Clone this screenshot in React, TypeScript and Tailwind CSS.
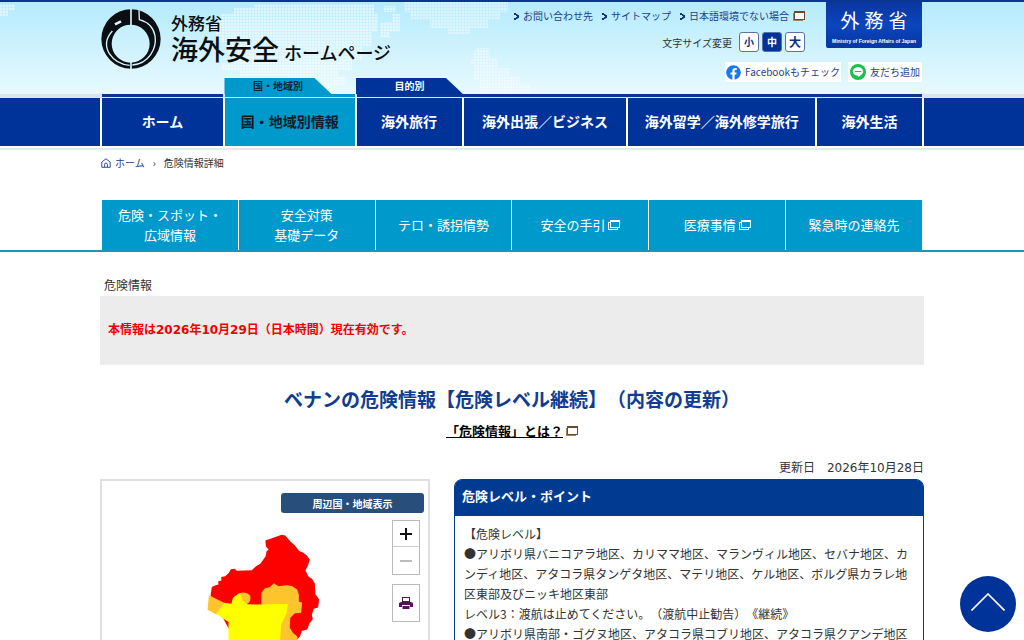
import type { ReactNode } from 'react';
import { FaFacebook } from 'react-icons/fa';
import clsx from 'clsx';

/* ── Icons and drawings ── */

function NewWindowIcon({ className }: { className?: string }) {
  return (
    <svg viewBox="0 0 12 10" className={className} aria-hidden="true">
      <path d="M0 2h2v7h8v1H0z" fill="#a5825a" />
      <rect x="1.500" y="0.500" width="10" height="8" fill="#fff" stroke="#6b4a2b" />
      <path d="M1 1h11" stroke="#6b4a2b" strokeWidth="2" />
    </svg>
  );
}

function NewWindowLineIcon({ className }: { className?: string }) {
  return (
    <svg viewBox="0 0 12 10" className={className} aria-hidden="true">
      <path fill="#fff" fillRule="evenodd" d="M2 0h10v8h-2v2H0V2h2zM3 2v5h8V2zM1 3v6h8V8H2V3z" />
    </svg>
  );
}

function ArrowDots() {
  return (
    <svg viewBox="0 0 5 7" fill="#14337f" className="h-[7px] w-[5px] shrink-0" aria-hidden="true">
      <path d="M0 0h2v2H0zM3 2h2v3H3zM0 5h2v2H0zM2 1h1.5v2H2zM2 4h1.5v2H2z" />
    </svg>
  );
}

function LogoMark({ className }: { className?: string }) {
  return (
    <svg viewBox="0 0 180 180" fill="none" className={className} aria-hidden="true">
      <path
        fill="#0b0f14"
        fillRule="evenodd"
        d="M90 1a89 89 0 1 1 0 178a89 89 0 1 1 0-178zM89 47a57 57 0 1 0 0 114a57 57 0 1 0 0-114z"
      />
      <g stroke="#d3f4fd">
        <path d="M90 0v50M90 155v25" strokeWidth="5" />
        <path d="M34 66C14 88 12 112 25 134C38 154 58 167 86 169" strokeWidth="4" />
        <path d="M114 4l1 28c22 6 42 22 47 48c6 38-18 84-68 88" strokeWidth="4" />
        <path d="M42 46l18-9" strokeWidth="8" />
      </g>
    </svg>
  );
}

function LineIcon({ className }: { className?: string }) {
  return (
    <svg viewBox="0 0 16 16" className={className} aria-hidden="true">
      <circle cx="8" cy="8" r="8" fill="#17c14c" />
      <path d="M8 3.2c3 0 5.2 1.900 5.200 4.300c0 2.300-3 4.300-5 5.600c.1-.9 0-1.300-.6-1.300C4.800 11.500 2.800 9.800 2.800 7.500c0-2.400 2.200-4.300 5.200-4.300z" fill="#fff" />
      <path d="M5 7.500h6" stroke="#17c14c" />
    </svg>
  );
}

function HomeIcon({ className }: { className?: string }) {
  return (
    <svg viewBox="0 0 10 10" fill="none" stroke="#2f4f9f" className={className} aria-hidden="true">
      <path d="M0.800 9.300V4L5 0.800L9.200 4v5.300z" />
      <path d="M3.600 9V6.500a1.400 1.400 0 0 1 2.800 0V9" />
    </svg>
  );
}

function PrintIcon({ className }: { className?: string }) {
  return (
    <svg viewBox="0 0 14 14" fill="#571158" className={className} aria-hidden="true">
      <path fillRule="evenodd" d="M3 1h8v5H3zM4 2v3h6V2z" />
      <path d="M2 6h10l2 1v4h-3V9H3v2H0V7z" />
      <path d="M3.500 10h7v3h-7z" />
    </svg>
  );
}

// Dotted continents behind the site title
function WorldDots() {
  return (
    <svg viewBox="0 0 1024 94" preserveAspectRatio="xMidYMin slice" className="absolute inset-0 h-full w-full" aria-hidden="true">
      <defs>
        <pattern id="dots" width="3" height="3" patternUnits="userSpaceOnUse">
          <rect width="2.400" height="2.400" fill="#fff" />
        </pattern>
      </defs>
      <g fill="url(#dots)" opacity="0.55">
        <path d="M0 2h15v6H8v6H0z" />
        <path d="M222 12h12V6h20v-4h120v10h4v18h-6v14h-10v14h-10v10h-14v6h8v10h-12v2h-16v-4h-30v-8h-48v-6h-18v-6h12v-10h-6V40h-12V28h-12z" />
        <path d="M380 20h12v-8h8v18h-10v6h-10zM384 4h12v6h-12z" />
      </g>
      <g fill="url(#dots)" opacity="0.45">
        <path d="M404 0h104v10h-8v8h-12v8h-18v6h-22v-6h-18v-8h-20v-8h-6z" />
        <path d="M476 46h14v10h8v10h12v8h10v8h10v12h-50v-16h-6V62h-4z" />
      </g>
    </svg>
  );
}

function DangerMap() {
  return (
    <svg viewBox="34 31 982 600" preserveAspectRatio="xMinYMin meet" className="block w-full" role="img" aria-label="危険情報地図">
      <path
        fill="#fd0000"
        d="M575 193L586 195L603 215L614 224L628 242L640 247L652 256L660 268L654 286L647 300L655 318L667 326L675 340L677 372L688 388L685 412L672 416L666 434L669 447L659 460L652 478L636 483L630 500L610 520L440 520L361 375L365 350L376 345L385 343L384 333L394 331L393 320L405 318L416 308L422 297L434 295L440 301L485 300L498 288L511 280L527 258L530 242L536 238L528 228L526 210L548 203Z"
      />
      <path fill="#fdc42b" d="M356 375L402 398L380 434L352 419Z" />
      <path
        fill="#fdc42b"
        d="M514 404V368L524 355L540 350L552 339L566 348L590 345L606 347L622 358L627 374V395L637 397L634 428L614 430L601 444L600 474L609 488L623 500L618 570L560 600H500Z"
      />
      <path fill="#fdc42b" d="M440 374C450 364 470 364 480 376C484 392 478 398 466 404H430Z" />
      <path
        fill="#ff0"
        d="M402 398L424 401L428 384C438 372 448 370 454 376C454 388 460 396 472 402L500 403L594 401L590 430L574 464L570 520V630H415V456L378 432Z"
      />
    </svg>
  );
}

/* ── Page data ── */

const navItems = ['ホーム', '国・地域別情報', '海外旅行', '海外出張／ビジネス', '海外留学／海外修学旅行', '海外生活'];

const navColumns =
  'mx-auto grid w-full max-w-[824px] grid-cols-[121fr_130fr_105fr_163fr_187fr_105fr] gap-x-[2px] px-[2px]';

const subTabs: { label: ReactNode; external?: boolean }[] = [
  { label: <>危険・スポット・<br />広域情報</> },
  { label: <>安全対策<br />基礎データ</> },
  { label: 'テロ・誘拐情勢' },
  { label: '安全の手引', external: true },
  { label: '医療事情', external: true },
  { label: '緊急時の連絡先' },
];

const fontSizes = ['小', '中', '大'];

function SiteHeader() {
  return (
    <header>
      <div className="relative border-t-2 border-[#0a3592] bg-linear-to-b from-[#b4ebfd] to-[#e8f9fe]">
        <WorldDots />
        <div className="relative mx-auto flex h-[76px] max-w-[824px] justify-between">
          <a href="#" className="flex gap-[10px] pt-[7px] text-[#0b0f14]">
            <LogoMark className="ml-px size-[60px]" />
            <h1 className="pt-[4px] font-medium">
              <span className="block text-[17px] leading-[20px]">外務省</span>
              <span className="block leading-[32px]">
                <span className="text-[27px]">海外安全</span>
                <span className="ml-[5px] text-[18px]">ホームページ</span>
              </span>
            </h1>
          </a>

          <div className="flex flex-col items-end text-[10px] text-[#1f3f8c]">
            <div className="flex gap-[21px]">
              <div className="flex flex-col items-end gap-[8px] pt-[6px]">
                <ul className="flex gap-[9px] leading-4">
                  <li className="flex items-center gap-1"><ArrowDots /><a href="#">お問い合わせ先</a></li>
                  <li className="flex items-center gap-1"><ArrowDots /><a href="#">サイトマップ</a></li>
                  <li className="flex items-center gap-1">
                    <ArrowDots /><a href="#">日本語環境でない場合</a>
                    <NewWindowIcon className="h-[10px] w-3" />
                  </li>
                </ul>
                <div className="flex items-center gap-[3px]">
                  <span className="mr-1 text-[#333]">文字サイズ変更</span>
                  {fontSizes.map((size) => (
                    <button
                      key={size}
                      className={clsx(
                        'size-5 rounded-[3px] border border-[#5973a8] font-bold leading-4',
                        size === '中' ? 'bg-[#003399] text-white' : 'bg-white text-[#0a2d80]',
                        size === '大' && 'text-[12px]',
                      )}
                    >
                      {size}
                    </button>
                  ))}
                </div>
              </div>
              <a href="#" className="mr-[2px] flex h-[46px] w-24 flex-col items-center rounded-b-[2px] bg-linear-to-b from-[#0a36a0] via-[#0b45bd] to-[#0836a4] pt-[6px] text-white">
                <span className="flex gap-[5px] font-['Noto_Sans_CJK_JP',sans-serif] text-[19px] leading-[24px]">
                  <span>外</span><span>務</span><span>省</span>
                </span>
                <span className="mt-[3px] whitespace-nowrap font-['Liberation_Sans',sans-serif] text-[5px] font-bold leading-[12px]">
                  Ministry of Foreign Affairs of Japan
                </span>
              </a>
            </div>
            <div className="mr-[2px] mt-[10px] flex gap-[7px] leading-5">
              <a href="#" className="flex items-center gap-1 bg-white px-px">
                <FaFacebook className="size-[15px] text-[#1877f2]" />
                Facebookもチェック
              </a>
              <a href="#" className="flex items-center gap-1 bg-white px-[2px]">
                <LineIcon className="size-4" />
                友だち追加
              </a>
            </div>
          </div>
        </div>

        {/* ── Category tabs on top of the menu ── */}
        <div className={clsx(navColumns, 'relative text-[10px] font-bold leading-4')}>
          <span className="col-start-2 w-[107px] bg-[#0099cc] text-center text-[#10222e] [clip-path:polygon(0_0,90px_0,107px_100%,0_100%)]">
            国・地域別
          </span>
          <span className="w-[107px] bg-[#003399] text-center text-white [clip-path:polygon(0_0,90px_0,107px_100%,0_100%)]">
            目的別
          </span>
        </div>
      </div>

      {/* ── Main menu ── */}
      <div className="bg-[#e0e3e8] pb-px">
        <div className={navColumns}>
          <span className="h-[3px] bg-[#0d3590]" />
          <span className="h-[3px] bg-[#0099cc]" />
          <span className="col-span-4 h-[3px] bg-[#0d3590]" />
        </div>
      </div>
      <nav className="border-b-2 border-white bg-[#003399]">
        <ul className={clsx(navColumns, 'bg-white text-center text-[14px] font-bold leading-[46px]')}>
          {navItems.map((item) => (
            <li key={item}>
              <a
                href="#"
                className={clsx(
                  'block whitespace-nowrap pb-[2px]',
                  item === '国・地域別情報' ? 'bg-[#0099cc] text-[#0b1c26]' : 'bg-[#003399] text-white',
                )}
              >
                {item}
              </a>
            </li>
          ))}
        </ul>
      </nav>
      <div className="h-[2px] bg-[#e6e6ee]" />
    </header>
  );
}

function SubTabs() {
  return (
    <nav className="mt-[26px] border-b-2 border-[#1b94c0]">
      <ul className="mx-auto grid max-w-[820px] grid-cols-6 gap-px text-[13px] leading-5 text-white">
        {subTabs.map((tab, i) => (
          <li key={i}>
            <a href="#" className="flex h-[50px] items-center justify-center gap-[3px] bg-[#0099cc] text-center">
              <span>{tab.label}</span>
              {tab.external && <NewWindowLineIcon className="h-[10px] w-3" />}
            </a>
          </li>
        ))}
      </ul>
    </nav>
  );
}

function MapPanel() {
  return (
    <section className="relative w-[330px] shrink-0 border-2 border-[#e0e0e0]">
      <DangerMap />
      <button className="absolute right-1 top-3 h-5 w-[143px] rounded-[3px] bg-[#284f7b] text-[10px] font-bold text-white">
        周辺国・地域表示
      </button>
      <div className="absolute right-2 top-[39px] flex w-7 flex-col gap-[9px]">
        <div className="divide-y divide-[#ccc] border border-[#bbb] bg-white">
          <button aria-label="拡大" className="flex h-[26px] w-full items-center justify-center">
            <svg viewBox="0 0 12 12" stroke="#111" strokeWidth="2" className="size-3"><path d="M6 0v12M0 6h12" /></svg>
          </button>
          <button aria-label="縮小" className="flex h-[27px] w-full items-center justify-center">
            <svg viewBox="0 0 12 12" stroke="#bbb" strokeWidth="2" className="size-3"><path d="M0 6h12" /></svg>
          </button>
        </div>
        <button aria-label="印刷" className="flex h-[38px] items-center justify-center border border-[#bbb] bg-white">
          <PrintIcon className="size-[14px]" />
        </button>
      </div>
    </section>
  );
}

function LevelPanel() {
  return (
    <section className="min-w-0 flex-1 rounded-t-[8px] border border-[#003b92]">
      <h3 className="rounded-t-[6px] bg-[#003b92] pb-1 pl-[7px] text-[13px] font-bold leading-8 text-white">
        危険レベル・ポイント
      </h3>
      <div className="pb-6 pl-[9px] pr-3 pt-[8px] leading-5">
        <p>【危険レベル】</p>
        <p>●アリボリ県バニコアラ地区、カリママ地区、マランヴィル地区、セバナ地区、カンディ地区、アタコラ県タンゲタ地区、マテリ地区、ケル地区、ボルグ県カラレ地区東部及びニッキ地区東部</p>
        <p>レベル3：渡航は止めてください。（渡航中止勧告）《継続》</p>
        <p>●アリボリ県南部・ゴグヌ地区、アタコラ県コブリ地区、アタコラ県クアンデ地区</p>
      </div>
    </section>
  );
}

export default function App() {
  return (
    <div
      lang="ja"
      className="h-screen overflow-hidden bg-white font-['Noto_Sans_CJK_JP',sans-serif] text-[12px] text-[#333] [text-spacing-trim:space-all]"
    >
      <SiteHeader />

      <ol className="mx-auto mt-[3px] flex max-w-[822px] items-center gap-[5px] text-[10px] leading-5">
        <li className="flex items-center gap-1 text-[#24438f]">
          <HomeIcon className="size-[10px]" />
          <a href="#">ホーム</a>
        </li>
        <li aria-hidden="true" className="px-[3px]">›</li>
        <li>危険情報詳細</li>
      </ol>

      <div className="pt-px">
        <SubTabs />
      </div>

      <main className="mx-auto max-w-[824px]">
        <p className="mt-[23px] pl-1 leading-5">危険情報</p>
        <div className="mt-px bg-[#ececec] px-2 pb-[25px] pt-[24px]">
          <p className="font-['DejaVu_Sans','Noto_Sans_CJK_JP',sans-serif] font-bold leading-5 text-[#f00000]">
            本情報は2026年10月29日（日本時間）現在有効です。
          </p>
        </div>

        <h2 className="mt-[20px] text-center text-[19px] font-bold leading-7 text-[#103d91]">
          ベナンの危険情報【危険レベル継続】（内容の更新）
        </h2>
        <p className="mt-[8px] flex items-center justify-center gap-[3px] text-[13px] font-bold leading-5 text-black">
          <a href="#" className="underline">「危険情報」とは？</a>
          <NewWindowIcon className="h-[10px] w-3" />
        </p>

        <p className="mt-[17px] text-right font-['DejaVu_Sans','Noto_Sans_CJK_JP',sans-serif] leading-5">
          更新日　2026年10月28日
        </p>
        <div className="mt-px flex items-stretch gap-6">
          <MapPanel />
          <LevelPanel />
        </div>
      </main>

      <a href="#" aria-label="ページの先頭へ" className="fixed bottom-2 right-2 flex size-14 items-center justify-center rounded-full bg-[#003399]">
        <svg viewBox="0 0 34 18" fill="none" stroke="#fff" strokeWidth="1.600" className="mb-1 h-[18px] w-[34px]">
          <path d="M0.500 17.500L17 1l16.500 16.500" />
        </svg>
      </a>
    </div>
  );
}
